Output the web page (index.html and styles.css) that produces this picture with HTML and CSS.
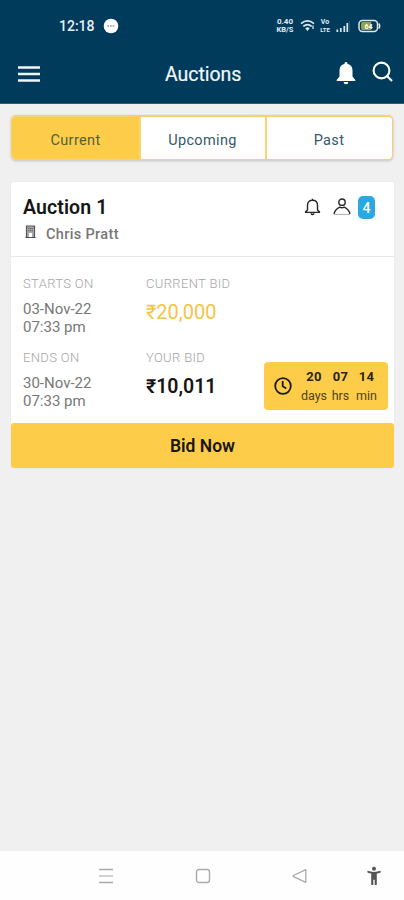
FILE: index.html
```html
<!DOCTYPE html>
<html lang="en">
<head>
<meta charset="utf-8">
<meta name="viewport" content="width=device-width, initial-scale=1">
<title>Auctions</title>
<link rel="stylesheet" href="styles.css">
</head>
<body>
<div class="app">
  <header class="top">
    <div class="status">
      <span class="clock">12:18</span>
      <svg class="chat" width="16" height="16" viewBox="0 0 16 16"><circle cx="8" cy="8" r="7.3" fill="#fff"/><path d="M4.5 8h7" stroke="#8496a8" stroke-width="1.3" stroke-dasharray="1.6 1"/></svg>
      <div class="signals">
        <span class="tiny speed"><b>0.40</b><b>KB/S</b></span>
        <svg class="wifi" width="16" height="14" viewBox="0 0 16 14" fill="none" stroke="#dce8f0" stroke-width="1.7"><path d="M1 4.6Q7.5-.8 14 4.6M3.3 7.3Q7.5 3.8 11.7 7.3"/><path d="M5.3 9.2Q7.5 7.5 9.7 9.2L7.5 12z" fill="#dce8f0" stroke="none"/><path d="M13 6.5v3.5" stroke-width="1.3"/></svg>
        <span class="tiny volte"><b>Vo</b><b>LTE</b></span>
        <svg class="bars" width="14" height="14" viewBox="0 0 14 14"><path d="M1.3 12V9.500M4.8 12V8M8.3 12V6M11.300 12V3" stroke="#dce8f0" stroke-width="1.7"/><path d="M13.300 12V1" stroke="#2d5b78"/></svg>
        <svg width="23" height="14" viewBox="0 0 23 14"><rect x="1" y="1.5" width="18.5" height="11" rx="3.4" fill="none" stroke="#dce5e8" stroke-width="1.5"/><path d="M4.5 3h8.7v8H4.5Q3 11 3 9V5q0-2 1.500-2" fill="#94a052"/><path d="M20.700 4.500q2 2.500 0 5" fill="none" stroke="#dce5e8" stroke-width="1.500"/><text x="6.500" y="9.700" class="charge">64</text></svg>
      </div>
    </div>
    <div class="nav">
      <svg class="menu" width="22" height="18" viewBox="0 0 22 18"><path d="M0 2.500h22M0 9h22M0 15.500h22" stroke="#f2f5fa" stroke-width="2.600"/></svg>
      <h1>Auctions</h1>
      <svg class="bell" width="20" height="24" viewBox="0 0 20 24"><path d="M10 1q1.500 0 1.600 1.900C15 3.600 16.500 6 16.500 9.500v6L19.300 19v1H.7v-1l2.800-3.500v-6C3.500 6 5 3.600 8.400 2.900 8.500 1 10 1 10 1zM7.600 21h4.800Q12.200 23.200 10 23.200T7.600 21z" fill="#fff"/></svg>
      <svg class="search" width="22" height="22" viewBox="0 0 22 22" fill="none" stroke="#fff" stroke-width="2.100"><circle cx="9.500" cy="9.500" r="7.900"/><path d="M15 15l5 5"/></svg>
    </div>
  </header>

  <main>
    <nav class="tabs">
      <a class="tab active">Current</a>
      <a class="tab">Upcoming</a>
      <a class="tab">Past</a>
    </nav>

    <article class="card">
      <div class="card-head">
        <div class="title">
          <h2>Auction 1</h2>
          <p class="owner"><svg width="11" height="14" viewBox="0 0 11 14"><path d="M1.500 1h8v11.500h-8z" fill="#aaa" stroke="#555" stroke-width="1.200"/><path d="M3.200 3.500h4.600M3.200 5.700h4.600" stroke="#555" stroke-dasharray="1.200 .5"/><path d="M4 8h3v4H4z" fill="#fff"/><path d="M.5 12.500h3M7.500 12.500h3" stroke="#444" stroke-width="1.200"/></svg><span>Chris Pratt</span></p>
        </div>
        <div class="tools">
          <svg width="17" height="18" viewBox="0 0 17 18" fill="none" stroke="#262626" stroke-width="1.400"><path d="M8.500.7v1.600M3.500 12V7.200C3.500 4 5.700 2.300 8.500 2.300s5 1.700 5 4.900V12l1.900 1.900v.5H1.600v-.5zM6.800 15.500q1.700 2 3.400 0"/></svg>
          <svg class="person" width="18" height="18" viewBox="0 0 18 18" fill="none" stroke="#262626" stroke-width="1.400"><circle cx="9" cy="4.200" r="3.200"/><path d="M1 16Q1.800 11.800 6.700 9.200 9 10.400 11.300 9.200 16.200 11.800 17 16"/><path d="M1 16.400h16" stroke="#999" stroke-width=".8"/></svg>
          <span class="count">4</span>
        </div>
      </div>
      <div class="card-body">
        <section class="dates">
          <h3>STARTS ON</h3>
          <p>03-Nov-22<br>07:33 pm</p>
        </section>
        <section class="bid">
          <h3>CURRENT BID</h3>
          <p class="current">₹20,000</p>
        </section>
        <section class="dates ends">
          <h3>ENDS ON</h3>
          <p>30-Nov-22<br>07:33 pm</p>
        </section>
        <section class="bid">
          <h3>YOUR BID</h3>
          <p class="yours">₹10,011</p>
        </section>
        <div class="timer">
          <svg width="20" height="20" viewBox="0 0 20 20" fill="none" stroke="#1d1a10" stroke-width="1.800"><circle cx="10" cy="10" r="7.800"/><path d="M9.700 5v5.200l3.600 2.200"/></svg>
          <div class="unit"><b>20</b><span>days</span></div>
          <div class="unit"><b>07</b><span>hrs</span></div>
          <div class="unit"><b>14</b><span>min</span></div>
        </div>
      </div>
      <button class="cta">Bid Now</button>
    </article>
  </main>

  <footer class="system">
    <svg width="16" height="16" viewBox="0 0 16 16"><path d="M1 1.500h14M1 14.500h14" stroke="#aaa" stroke-width="1.300"/><path d="M1 8h14" stroke="#d2d2d2" stroke-width="2"/></svg>
    <svg width="16" height="16" viewBox="0 0 16 16"><rect x="1.500" y="1.500" width="13" height="13" rx="2.500" fill="none" stroke="#aaa" stroke-width="1.400"/></svg>
    <svg width="16" height="16" viewBox="0 0 16 16"><path d="M13.800 1.700v12.600L1.500 8.700q-1-.6 0-1.200z" fill="none" stroke="#aaa" stroke-width="1.300" stroke-linejoin="round"/></svg>
    <svg width="14" height="20" viewBox="0 0 14 20"><circle cx="7" cy="2.700" r="2" fill="#555"/><path d="M.4 4.800Q7 7.100 13.600 4.800v1.600Q11.500 7.400 9.800 7.600V19H7.700v-5.300H6.300V19H4.200V7.600Q2.500 7.400.4 6.400z" fill="#555"/></svg>
  </footer>
</div>
</body>
</html>
```

FILE: styles.css
```css
* { box-sizing: border-box; }
body { margin: 0; font-family: Roboto, "Noto Sans", sans-serif; color: #111; }
h1, h2, h3, p { margin: 0; font-weight: 400; }
svg { display: block; flex: none; }
.app { height: 900px; display: flex; flex-direction: column; background: #f0f0f0; }

.top { height: 104px; background: #003b5c; border-bottom: 1px solid #315a73; color: #fff; }
.status { height: 52px; padding: 0 23px 0 59px; display: flex; align-items: center; }
.clock { font-size: 14px; color: #e8eff5; font-weight: 500; }
.chat { margin-left: 8px; }
.signals { margin-left: auto; display: flex; align-items: center; }
.tiny { display: flex; flex-direction: column; align-items: center; color: #e2ebf2; }
.speed { width: 20px; font-size: 8px; line-height: 8px; }
.speed b:last-child { font-size: 7.5px; }
.wifi { margin-left: 5px; }
.volte { width: 10px; margin-left: 4px; font-size: 6px; line-height: 8px; }
.volte b:first-child { font-size: 7px; }
.bars { margin: 2px 8px 0 6px; }
.charge { font-size: 7px; font-weight: 700; fill: #fff; }

.nav { display: grid; grid-template-columns: 147px 1fr 36px 22px; height: 43px; padding: 0 10px 0 18px; align-items: center; }
.nav h1 { font-size: 19.5px; line-height: 24px; padding-top: 2px; color: #f3f7fc; -webkit-text-stroke: .2px #f3f7fc; letter-spacing: -.05px; }
.bell { margin-top: -2px; }
.search { margin-top: -4px; }

main { flex: 1; padding: 11px 10px 0 11px; }
.tabs { display: grid; grid-template-columns: 127px 126px 1fr; height: 45px; border: 1px solid #f8d16d; border-top-width: 2px; border-radius: 5px; background: #fff; box-shadow: 0 1px 3px #0003; overflow: hidden; margin-right: 1px; }
.tab { display: flex; align-items: center; justify-content: center; font-size: 14.5px; letter-spacing: .35px; color: #355a68; padding-top: 5px; }
.tab + .tab { border-left: 2px solid #fad36e; padding-right: 1px; }
.tab.active { background: #fdcd49; color: #53613d; }

.card { margin-top: 22px; background: #fff; border-radius: 3px; box-shadow: 0 0 2px #0001; }
.card-head { height: 75px; padding: 12px 19px 0 12px; display: flex; justify-content: space-between; border-bottom: 1px solid #e9e9e9; }
h2 { font-size: 19.5px; line-height: 26px; padding-top: 1px; font-weight: 600; letter-spacing: .1px; color: #151515; }
.owner { display: flex; font-size: 14.5px; line-height: 20px; margin: 4px 0 0 2px; color: #777; font-weight: 500; letter-spacing: .35px; }
.owner span { margin-left: 10px; }
.tools { display: flex; align-items: center; height: 26px; }
.person { margin: 0 7px 0 12px; }
.count { width: 17px; height: 23px; border-radius: 5px; background: #29a9df; color: #fff; font-size: 14px; line-height: 24px; text-align: center; font-weight: 500; }

.card-body { height: 166px; padding: 18px 6px 0 12px; display: grid; grid-template-columns: 123px 118px 124px; grid-template-rows: 74px 74px; }
h3 { font-size: 13px; line-height: 17px; color: #a5a5a5; font-weight: 300; letter-spacing: .35px; white-space: nowrap; }
.dates p { margin-top: 8px; font-size: 15px; line-height: 18px; color: #777; }
.ends { grid-column: 1; }
.bid p { margin-top: 8px; font-size: 20px; line-height: 24px; }
.bid .current { color: #f6c344; }
.bid .yours { font-size: 19.5px; line-height: 26px; font-weight: 600; color: #151515; }
.timer { grid-column: 3; grid-row: 2; width: 124px; height: 48px; margin-top: 13px; padding-left: 9px; border-radius: 4px; background: #fdcd49; display: grid; grid-template-columns: 27px 28px 25px 27px; align-items: center; }
.unit { display: flex; flex-direction: column; align-items: center; color: #4d421f; }
.unit b { font-size: 13px; line-height: 19px; letter-spacing: .4px; color: #282411; }
.unit span { font-size: 12.5px; line-height: 20px; }
.cta { display: block; width: 100%; height: 45px; border: 0; border-radius: 3px; background: #fdcd49; font: 600 17.5px/45px Roboto, sans-serif; color: #171717; padding: 1px 0 0; }

.system { height: 49px; background: #fefefe; display: grid; grid-template-columns: 97px 97px 75px 14px; padding-left: 98px; align-items: center; }
```
